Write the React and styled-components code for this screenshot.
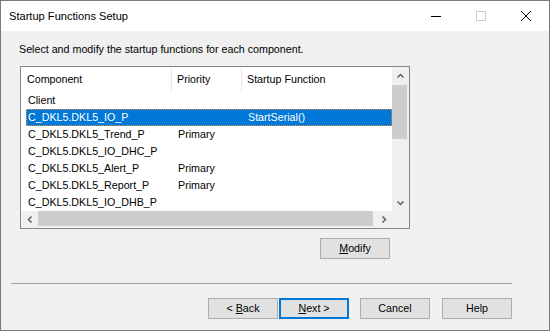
import { styled, createGlobalStyle } from "styled-components";

const GlobalStyle = createGlobalStyle`
  html, body { margin: 0; padding: 0; background: #f0f0f0; }
  body { font-family: "Liberation Sans", Arial, sans-serif; }
`;

const Window = styled.div({
  width: "550px",
  height: "331px",
  boxSizing: "border-box",
  border: "1px solid #7a7a7a",
  background: "#f0f0f0",
  display: "flex",
  flexDirection: "column",
});

const TitleBar = styled.div({
  height: "30px",
  background: "#fff",
  display: "flex",
  alignItems: "center",
  flexShrink: 0,
});

const Title = styled.div({
  flex: 1,
  paddingLeft: "8px",
  fontSize: "11.1px",
  color: "#000",
});

const CaptionButton = styled.div({
  width: "45px",
  height: "30px",
  display: "flex",
  alignItems: "center",
  justifyContent: "center",
});

const Body = styled.div({
  flex: 1,
  fontSize: "10.7px",
  color: "#000",
  display: "flex",
  flexDirection: "column",
});

const Instruction = styled.div({
  lineHeight: "13px",
  padding: "12px 0 0 18px",
});

const ListBox = styled.div({
  marginTop: "10px",
  marginLeft: "19px",
  width: "390px",
  height: "163px",
  boxSizing: "border-box",
  border: "1px solid #828790",
  background: "#fff",
  display: "grid",
  gridTemplateColumns: "371px 17px",
  gridTemplateRows: "144px 17px",
});

const ListMain = styled.div({
  display: "flex",
  flexDirection: "column",
  overflow: "hidden",
});

const Header = styled.div({
  height: "25px",
  display: "grid",
  gridTemplateColumns: "151px 70px 1fr",
  flexShrink: 0,
});

const HeaderCell = styled.div`
  line-height: 25px;
  padding-left: ${(p) => p.$pad}px;
  position: relative;
  white-space: nowrap;
  &::after {
    content: "";
    display: ${(p) => (p.$last ? "none" : "block")};
    position: absolute;
    right: 0;
    top: 1px;
    bottom: 0;
    width: 1px;
    background: #e5e5e5;
  }
`;

const Row = styled.div`
  height: 17px;
  margin-left: 5px;
  box-sizing: border-box;
  display: grid;
  grid-template-columns: 146px 70px 1fr;
  line-height: 15px;
  white-space: nowrap;
  background: ${(p) => (p.$selected ? "#0078d7" : "transparent")};
  color: ${(p) => (p.$selected ? "#fff" : "#000")};
  border: 1px dotted ${(p) => (p.$selected ? "#e09040" : "transparent")};
`;

const Cell = styled.div`
  padding-left: ${(p) => p.$pad}px;
`;

const VScroll = styled.div({
  background: "#f0f0f0",
  display: "flex",
  flexDirection: "column",
});

const HScroll = styled.div({
  background: "#f0f0f0",
  display: "flex",
});

const ArrowBox = styled.div({
  width: "17px",
  height: "17px",
  display: "flex",
  alignItems: "center",
  justifyContent: "center",
  flexShrink: 0,
});

const VThumb = styled.div({
  width: "15px",
  height: "54px",
  margin: "1px 1px 0 0",
  background: "#cdcdcd",
});

const HThumb = styled.div({
  width: "335px",
  height: "15px",
  marginTop: "0px",
  background: "#cdcdcd",
});

const Spacer = styled.div({ flex: 1 });

const Corner = styled.div({ background: "#f0f0f0" });

const ModifyRow = styled.div({
  marginTop: "9px",
  width: "389px",
  display: "flex",
  justifyContent: "flex-end",
});

const Separator = styled.div({
  marginTop: "24px",
  marginLeft: "10px",
  width: "501px",
  height: "1px",
  background: "#a0a0a0",
});

const ButtonRow = styled.div({
  marginTop: "14px",
  display: "flex",
  paddingLeft: "207px",
});

const Button = styled.div`
  width: 70px;
  height: 21px;
  box-sizing: border-box;
  margin-left: ${(p) => p.$gap || 0}px;
  background: #e1e1e1;
  border: ${(p) => (p.$default ? "2px solid #0078d7" : "1px solid #adadad")};
  display: flex;
  align-items: center;
  justify-content: center;
  line-height: 13px;
  u { text-decoration: underline; text-underline-offset: 1px; }
`;

const Chevron = ({ dir }) => {
  const pts = {
    up: "0.5,4.5 3.5,1.5 6.5,4.5",
    down: "0.5,1.5 3.5,4.5 6.5,1.5",
    left: "4.5,0.5 1.5,3.5 4.5,6.5",
    right: "1.5,0.5 4.5,3.5 1.5,6.5",
  }[dir];
  const vert = dir === "up" || dir === "down";
  return (
    <svg width={vert ? 7 : 6} height={vert ? 6 : 7} viewBox={vert ? "0 0 7 6" : "0 0 6 7"}>
      <polyline points={pts} fill="none" stroke="#606060" strokeWidth="1.5" />
    </svg>
  );
};

const rows = [
  ["Client", "", ""],
  ["C_DKL5.DKL5_IO_P", "", "StartSerial()"],
  ["C_DKL5.DKL5_Trend_P", "Primary", ""],
  ["C_DKL5.DKL5_IO_DHC_P", "", ""],
  ["C_DKL5.DKL5_Alert_P", "Primary", ""],
  ["C_DKL5.DKL5_Report_P", "Primary", ""],
  ["C_DKL5.DKL5_IO_DHB_P", "", ""],
];

function App() {
  return (
    <>
      <GlobalStyle />
      <Window>
        <TitleBar>
          <Title>Startup Functions Setup</Title>
          <CaptionButton>
            <svg width="10" height="10" shapeRendering="crispEdges">
              <line x1="0" y1="5.5" x2="10" y2="5.5" stroke="#000" strokeWidth="1" />
            </svg>
          </CaptionButton>
          <CaptionButton>
            <svg width="10" height="10" shapeRendering="crispEdges">
              <rect x="0.5" y="0.5" width="9" height="9" fill="none" stroke="#cccccc" />
            </svg>
          </CaptionButton>
          <CaptionButton style={{ marginRight: "1px" }}>
            <svg width="10" height="10">
              <path d="M0 0 L10 10 M10 0 L0 10" stroke="#000" strokeWidth="1" />
            </svg>
          </CaptionButton>
        </TitleBar>
        <Body>
          <Instruction>Select and modify the startup functions for each component.</Instruction>
          <ListBox>
            <ListMain>
              <Header>
                <HeaderCell $pad={6}>Component</HeaderCell>
                <HeaderCell $pad={5}>Priority</HeaderCell>
                <HeaderCell $pad={5} $last>Startup Function</HeaderCell>
              </Header>
              {rows.map((r, i) => (
                <Row key={i} $selected={i === 1}>
                  <Cell $pad={1}>{r[0]}</Cell>
                  <Cell $pad={5}>{r[1]}</Cell>
                  <Cell $pad={5}>{r[2]}</Cell>
                </Row>
              ))}
            </ListMain>
            <VScroll>
              <ArrowBox><Chevron dir="up" /></ArrowBox>
              <VThumb />
              <Spacer />
              <ArrowBox><Chevron dir="down" /></ArrowBox>
            </VScroll>
            <HScroll>
              <ArrowBox><Chevron dir="left" /></ArrowBox>
              <HThumb />
              <Spacer />
              <ArrowBox><Chevron dir="right" /></ArrowBox>
            </HScroll>
            <Corner />
          </ListBox>
          <ModifyRow>
            <Button><span><u>M</u>odify</span></Button>
          </ModifyRow>
          <Separator />
          <ButtonRow>
            <Button><span>&lt; <u>B</u>ack</span></Button>
            <Button $gap={1} $default><span><u>N</u>ext &gt;</span></Button>
            <Button $gap={11}>Cancel</Button>
            <Button $gap={12}>Help</Button>
          </ButtonRow>
        </Body>
      </Window>
    </>
  );
}

export default App;
